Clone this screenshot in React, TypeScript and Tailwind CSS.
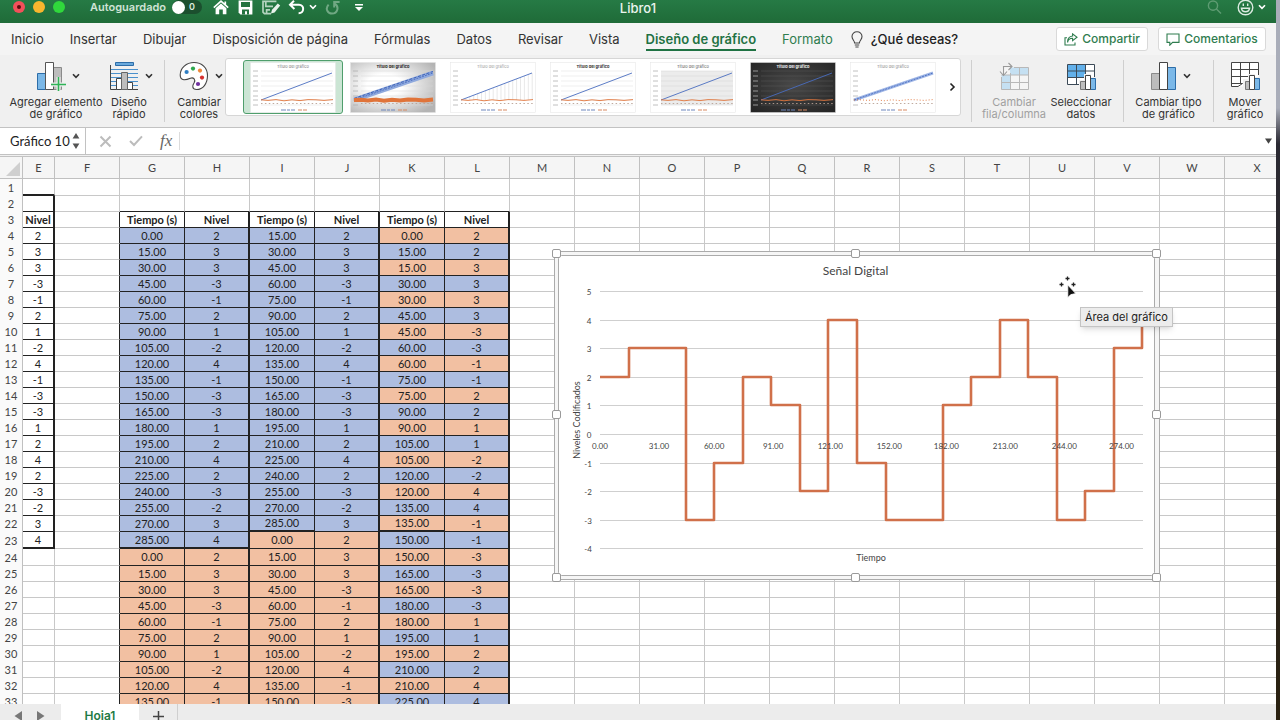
import React from "react";

const LEVELS = [2, 3, 3, -3, -1, 2, 1, -2, 4, -1, -3, -3, 1, 2, 4, 2, -3, -2, 3, 4];
const ROWS = Array.from({ length: 33 }, (_, i) => i + 1);
const COLS = "EFGHIJKLMNOPQRSTUVWX".split("");

const BLUE = "bg-[#adbde0]";
const ORANGE = "bg-[#f2c0a2]";

type Cell = { text: string; cls: string };

function cellFor(col: string, row: number): Cell {
  const light = "border-r border-b border-[#c8c8c8]";
  if (col === "E") {
    if (row === 1) return { text: "", cls: "border-r border-b-2 border-r-[#c8c8c8] border-b-[#222]" };
    if (row === 2) return { text: "", cls: "border-r-2 border-b border-[#222]" };
    if (row === 3) return { text: "Nivel", cls: "border-r-2 border-b border-[#222] font-bold" };
    if (row < 23) return { text: String(LEVELS[row - 4]), cls: "border-r-2 border-b border-[#222]" };
    if (row === 23) return { text: String(LEVELS[19]), cls: "border-r-2 border-b-2 border-[#222]" };
    return { text: "", cls: light };
  }
  if (col === "F") {
    return { text: "", cls: row >= 3 ? "border-r border-b border-b-[#c8c8c8] border-r-[#222]" : light };
  }
  const pair = "GHIJKL".indexOf(col);
  if (pair < 0 || row === 1) return { text: "", cls: light };
  if (row === 2) return { text: "", cls: "border-r border-b border-r-[#c8c8c8] border-b-[#222]" };

  const isTime = pair % 2 === 0;
  const right = isTime ? "border-r" : "border-r-2";
  if (row === 3) {
    return { text: isTime ? "Tiempo (s)" : "Nivel", cls: right + " border-b border-[#222] font-bold" };
  }
  let time = 0;
  let level = 0;
  let fill = BLUE;
  let bottom = "border-b";
  if (pair < 2) {
    const i = row < 24 ? row - 4 : row - 24;
    time = 15 * i;
    level = LEVELS[i];
    fill = row < 24 ? BLUE : ORANGE;
    if (row === 23) bottom = "border-b-2";
  } else if (pair < 4) {
    const first = row < 23;
    const i = first ? row - 4 : row - 23;
    time = first ? 15 * (i + 1) : 15 * i;
    level = LEVELS[i];
    fill = first ? BLUE : ORANGE;
    if (row === 22 && isTime) bottom = "border-b-2";
  } else {
    const i = row - 4;
    time = 15 * Math.ceil(i / 2);
    level = LEVELS[Math.floor(i / 2)];
    fill = i % 2 === 0 ? ORANGE : BLUE;
    if (row === 22 && isTime) bottom = "border-b-2";
  }
  return {
    text: isTime ? time.toFixed(2) : String(level),
    cls: right + " " + bottom + " border-[#222] " + fill,
  };
}

function rowHeight(row: number) {
  return row === 1 || row === 23 || row === 24 ? "h-[17px]" : "h-4";
}

function Chevron({ className = "" }: { className?: string }) {
  return (
    <svg width="8" height="6" viewBox="0 0 8 6" className={className} fill="none" stroke="currentColor" strokeWidth="1.6">
      <path d="M1 1.2 L4 4.4 L7 1.2" />
    </svg>
  );
}

/* ---------- Title bar ---------- */

function TitleBar() {
  return (
    <header className="relative flex h-[23px] shrink-0 items-center bg-linear-to-b from-[#267a45] to-[#1f6b38] pb-[9px] pl-[13px] pr-[10px] text-white">
      <div className="flex gap-2">
        <button aria-label="Cerrar" className="flex size-3 items-center justify-center rounded-full bg-[#f2505a]">
          <span className="size-1 rounded-full bg-[#5c0a0e]" />
        </button>
        <button aria-label="Minimizar" className="size-3 rounded-full bg-[#f8b62e]" />
        <button aria-label="Ampliar" className="size-3 rounded-full bg-[#30d83c]" />
      </div>
      <label className="ml-[25px] flex items-center gap-1.5 text-[11px] leading-[14px] font-semibold text-[#cfe3d5]">
        Autoguardado
        <span className="relative flex h-[14px] w-[30px] items-center rounded-full bg-[#1b4f2e]">
          <input type="checkbox" className="size-[13px] appearance-none rounded-full bg-white" />
          <span className="ml-1 text-[9px] leading-3 text-[#dbe9df]">0</span>
        </span>
      </label>
      <div className="ml-[11px] flex items-center">
        <button aria-label="Inicio" className="w-[25px]">
          <svg width="16" height="15" viewBox="0 0 16 15">
            <path d="M.8 7.6 L8 1.2 L15.2 7.6 M12.3 1.4 V4.6" fill="none" stroke="#fff" strokeWidth="1.7" />
            <path d="M2.6 8.2 L8 3.6 L13.4 8.2 V14.2 H9.8 V9.6 H6.2 V14.2 H2.6 Z" fill="#fff" />
          </svg>
        </button>
        <button aria-label="Guardar" className="w-[24px]">
          <svg width="15" height="15" viewBox="0 0 15 15">
            <path d="M.6 .6 H14.4 V14.4 H2.4 L.6 12.6 Z" fill="#fff" />
            <path d="M3 2 H12 V7 H3 Z M4 9.4 H11 V14.4 H9 V11.2 H7 V14.4 H4 Z" fill="#23733f" />
          </svg>
        </button>
        <button aria-label="Guardar como" className="w-[26px]">
          <svg width="19" height="15" viewBox="0 0 19 15">
            <path d="M9 13.6 H2.4 L1 12.2 V1.4 H14.4 M3.8 1.4 V6.4 H11 M4.6 13.6 V9.8 H8" fill="none" stroke="#b4d3bf" strokeWidth="1.7" />
            <path d="M9 13.6 L10 9.8 L15.8 3.4 L18.2 5.6 L12.6 12.4 Z" fill="#e8f2eb" />
          </svg>
        </button>
        <button aria-label="Deshacer" className="w-[21px]">
          <svg width="17" height="15" viewBox="0 0 17 15" fill="none" stroke="#fff" strokeWidth="2">
            <path d="M6 .8 L2 4.8 L6.4 9 M2.4 4.8 H11 C16.8 4.8 16.4 13 10.6 13.2" />
          </svg>
        </button>
        <button aria-label="Opciones de deshacer" className="w-[16px]">
          <Chevron />
        </button>
        <button aria-label="Rehacer" className="w-[30px]">
          <svg width="15" height="15" viewBox="0 0 15 15" fill="none" stroke="#70a883" strokeWidth="2">
            <path d="M3.6 4.6 C-.4 9 3 13.6 7 13.6 C12.6 13.6 14.6 6.6 9.6 3.6 M14.6 2 H9.2 V7.6" />
          </svg>
        </button>
        <button aria-label="Personalizar barra">
          <svg width="8" height="9" viewBox="0 0 8 9" fill="#fff">
            <path d="M0 1 H8 V2.4 H0 Z M0 4 H8 L4 8 Z" />
          </svg>
        </button>
      </div>
      <h1 className="absolute inset-x-0 top-0 text-center text-[13px] leading-4 font-medium text-[#eaf4ed] pointer-events-none">
        Libro1
      </h1>
      <div className="ml-auto flex items-center">
        <button aria-label="Buscar" className="w-[30px]">
          <svg width="15" height="15" viewBox="0 0 15 15" fill="none" stroke="#5f9c73" strokeWidth="1.4">
            <circle cx="6" cy="5.6" r="4.6" />
            <path d="M9.4 9 L14 13.6" />
          </svg>
        </button>
        <button aria-label="Comentarios de usuario" className="flex items-center gap-1">
          <svg width="17" height="17" viewBox="0 0 17 17" fill="none" stroke="#dcebe1" strokeWidth="1.4">
            <circle cx="8.5" cy="8.5" r="7.3" />
            <path d="M4.4 9.2 C5 14 12 14 12.6 9.2 Z M6.3 4.4 V7 M10.7 4.4 V7" />
          </svg>
          <Chevron />
        </button>
      </div>
    </header>
  );
}

/* ---------- Ribbon tabs ---------- */

function RibbonTabs() {
  const tabs = ["Inicio", "Insertar", "Dibujar", "Disposición de página", "Fórmulas", "Datos", "Revisar", "Vista"];
  return (
    <nav className="flex h-8 shrink-0 items-center bg-[#f4f4f4] pl-[11px] pr-[10px] text-[13px] leading-4 text-[#333]">
      <div className="flex items-center gap-[26px] whitespace-nowrap">
        {tabs.map((t) => (
          <button key={t}>{t}</button>
        ))}
        <button className="relative font-semibold text-[#1f7243] after:absolute after:inset-x-0 after:-bottom-1 after:h-[2px] after:bg-[#1f7243]">
          Diseño de gráfico
        </button>
        <button className="text-[#2f7d4f]">Formato</button>
      </div>
      <button className="ml-[18px] flex items-center gap-2 whitespace-nowrap font-medium text-[#222]">
        <svg width="12" height="17" viewBox="0 0 12 17" fill="none" stroke="#444" strokeWidth="1.1">
          <path d="M3.6 12 C3.6 9.6 1 8.8 1 5.6 C1 2.6 3.2 .8 6 .8 C8.8 .8 11 2.6 11 5.6 C11 8.8 8.4 9.6 8.4 12 Z M3.8 14 H8.2 M4.4 16 H7.6" />
        </svg>
        ¿Qué deseas?
      </button>
      <div className="ml-auto flex gap-[10px] text-[12px] font-medium text-[#2f7d4f]">
        <button className="flex h-6 w-[92px] items-center justify-center gap-1 rounded-[3px] border border-[#d9d9d9] bg-white">
          <svg width="14" height="13" viewBox="0 0 14 13" fill="none" stroke="currentColor" strokeWidth="1.1">
            <path d="M3 4.8 H1 V12 H11 V9.4 M3.6 9.4 C4 6.4 6 5.2 8.6 5.2 V7.6 L13 4.2 L8.6 .9 V3 C5 3.2 3.4 6 3.6 9.4 Z" />
          </svg>
          Compartir
        </button>
        <button className="flex h-6 w-[108px] items-center justify-center gap-1 rounded-[3px] border border-[#d9d9d9] bg-white">
          <svg width="14" height="13" viewBox="0 0 14 13" fill="none" stroke="currentColor" strokeWidth="1.1">
            <path d="M1 1 H13 V9.4 H6.6 L3.8 12.2 V9.4 H1 Z" />
          </svg>
          Comentarios
        </button>
      </div>
    </nav>
  );
}

/* ---------- Ribbon ---------- */

function RibbonButton(props: {
  lines: [string, string];
  width: string;
  icon: React.ReactNode;
  chevron?: boolean;
  disabled?: boolean;
}) {
  return (
    <button
      disabled={props.disabled}
      className={
        "flex shrink-0 flex-col items-center whitespace-nowrap text-[11px] leading-3 " +
        props.width +
        (props.disabled ? " text-[#a0a0a0]" : " text-[#333]")
      }
    >
      <span className={"flex h-[34px] items-center gap-1.5 " + (props.chevron ? "pl-1" : "")}>
        {props.icon}
        {props.chevron && <Chevron />}
      </span>
      <span className="mt-[3px]">{props.lines[0]}</span>
      <span>{props.lines[1]}</span>
    </button>
  );
}

function Separator() {
  return <span className="my-px h-[62px] w-px shrink-0 bg-[#cfcfcf]" />;
}

const AddElementIcon = (
  <svg width="30" height="30" viewBox="0 0 30 30">
    <path d="M1.5 12.5 H9.5 V28.5 H1.5 Z" fill="#7bb8e8" stroke="#2d6da8" />
    <path d="M17.5 6.5 H25.5 V28.5 H17.5 Z" fill="#bdbdbd" stroke="#8a8a8a" />
    <path d="M9.5 1.5 H17.5 V28.5 H9.5 Z" fill="#fff" stroke="#555" />
    <path d="M22.5 16 V30 M15 23.5 H30" stroke="#eee" strokeWidth="4" />
    <path d="M22.5 16 V30 M15 23.5 H30" stroke="#2fb457" strokeWidth="1.6" />
  </svg>
);

const QuickLayoutIcon = (
  <svg width="30" height="30" viewBox="0 0 30 30" fill="none">
    <path d="M6.5 1.5 H24.5 V4.5 H6.5 Z" fill="#6aa9dc" stroke="#2d6da8" />
    <path d="M2 8.5 H29 M2 12.5 H29 M2 16.5 H29 M2 20.5 H29 M2 24.5 H29" stroke="#4a90cc" />
    <path d="M1.5 4 V28.5 H29" stroke="#444" />
    <path d="M7.5 17.5 H12.5 V28.5 H7.5 Z M18.5 21.5 H23.5 V28.5 H18.5 Z" fill="#fff" stroke="#444" />
    <path d="M12.5 11.5 H18.5 V28.5 H12.5 Z" fill="#bdbdbd" stroke="#666" />
  </svg>
);

const PaletteIcon = (
  <svg width="30" height="30" viewBox="0 0 30 30">
    <path
      d="M15 1.5 C22.8 1.5 28.5 6.6 28.5 14.6 C28.5 22.6 24 28.5 17.6 28.5 C12.8 28.5 13.2 24.6 15 22 C17 18.8 14.6 16 11.4 17.2 C7.6 18.8 1.2 20.6 1.2 14 C1.2 7 7.4 1.5 15 1.5 Z"
      fill="#fff"
      stroke="#444"
      strokeWidth="1.1"
    />
    <circle cx="7.6" cy="11" r="2.1" fill="#2f7fc4" />
    <circle cx="14" cy="7.6" r="2.1" fill="#2fa84f" />
    <circle cx="21" cy="9.6" r="2.1" fill="#ee8a3c" />
    <circle cx="23" cy="16.6" r="2.1" fill="#d5302f" />
    <circle cx="19" cy="23" r="2.1" fill="#70309f" />
  </svg>
);

const SwitchRowColIcon = (
  <svg width="30" height="30" viewBox="0 0 30 30" fill="none">
    <path d="M2.5 6.5 H29.5 V28.5 H2.5 Z" fill="#f5f5f5" />
    <path d="M11 6.5 H29.5 V14 H11 Z M2.5 14 H11 V28.5 H2.5 Z" fill="#c5e0f2" />
    <path d="M15 6.5 H29.5 V28.5 H2.5 V16 M2.5 14 H29.5 M2.5 21.5 H29.5 M11.5 12 V28.5 M20.5 6.5 V28.5" stroke="#b8b8b8" />
    <path d="M4.5 14.5 V5.5 H12.5 M1 10.5 L4.5 14.5 L8 10.5 M9.5 2 L13 5.5 L9.5 9" stroke="#9a9a9a" strokeWidth="1.1" />
  </svg>
);

const SelectDataIcon = (
  <svg width="31" height="30" viewBox="0 0 31 30">
    <path d="M1.5 3.5 H28.5 V23.5 H1.5 Z" fill="#fff" />
    <path d="M1.5 3.5 H19.5 V16.5 H1.5 Z" fill="#62b0ea" />
    <path d="M1.5 3.5 H28.5 V23.5 H1.5 Z M1.5 10 H28.5 M1.5 16.5 H28.5 M10.5 3.5 V23.5 M19.5 3.5 V23.5" fill="none" stroke="#3c4a57" />
    <path d="M13 19 H18 V13 H25 V16 H31 V30 H13 Z" fill="#f0f0f0" />
    <path d="M14.5 20.5 H19.5 V28.5 H14.5 Z" fill="#bdbdbd" stroke="#777" />
    <path d="M24.5 17.5 H29.5 V28.5 H24.5 Z" fill="#7bb8e8" stroke="#2d6da8" />
    <path d="M19.5 14.5 H24.5 V28.5 H19.5 Z" fill="#fff" stroke="#444" />
  </svg>
);

const ChangeTypeIcon = (
  <svg width="27" height="30" viewBox="0 0 27 30">
    <path d="M1.5 12.5 H9.5 V28.5 H1.5 Z" fill="#bdbdbd" stroke="#8a8a8a" />
    <path d="M17.5 6.5 H25.5 V28.5 H17.5 Z" fill="#7bb8e8" stroke="#2d6da8" />
    <path d="M9.5 1.5 H17.5 V28.5 H9.5 Z" fill="#fff" stroke="#444" />
  </svg>
);

const MoveChartIcon = (
  <svg width="31" height="30" viewBox="0 0 31 30">
    <path d="M1.5 1.5 H28.5 V25.5 H1.5 Z" fill="#fff" />
    <path d="M28.5 14 V1.5 H1.5 V25.5 H8 L12.5 22.5 H1.5 M1.5 8.5 H28.5 M1.5 15.5 H20 M10.5 1.5 V22.5 M19.5 1.5 V16" fill="none" stroke="#444" />
    <path d="M13 18 H18 V13 H25 V16 H31 V30 H13 Z" fill="#f0f0f0" />
    <path d="M15.5 20.5 H19.5 V28.5 H15.5 Z" fill="#bdbdbd" stroke="#777" />
    <path d="M24.5 17.5 H29.5 V28.5 H24.5 Z" fill="#7bb8e8" stroke="#2d6da8" />
    <path d="M19.5 14.5 H24.5 V28.5 H19.5 Z" fill="#fff" stroke="#444" />
  </svg>
);

type ThumbStyle = {
  bg: string;
  title: string;
  grid: string;
  bold?: boolean;
  thick?: boolean;
  drops?: boolean;
  plot?: string;
  band?: boolean;
};

const THUMBS: ThumbStyle[] = [
  { bg: "#ffffff", title: "#777", grid: "#dcdcdc" },
  { bg: "url(#shade)", title: "#222", grid: "#d4d4d4", bold: true, thick: true },
  { bg: "#ffffff", title: "#999", grid: "#ffffff", drops: true },
  { bg: "#ffffff", title: "#333", grid: "#dcdcdc", bold: true },
  { bg: "#ffffff", title: "#555", grid: "#d6d6d6", plot: "#ececec" },
  { bg: "url(#dark)", title: "#eee", grid: "#5a5a5a", bold: true },
  { bg: "#ffffff", title: "#888", grid: "#ffffff", band: true },
];

function Thumb({ s }: { s: ThumbStyle }) {
  const ys = [9, 14, 19, 24, 29, 34, 38, 43];
  const xs = Array.from({ length: 19 }, (_, i) => 12 + i * 3.9);
  return (
    <svg width="86" height="51" viewBox="0 0 86 51">
      <defs>
        <radialGradient id="shade" cx="40%" cy="45%" r="70%">
          <stop offset="0.3" stopColor="#ffffff" />
          <stop offset="1" stopColor="#b4b4b4" />
        </radialGradient>
        <radialGradient id="dark" cx="50%" cy="45%" r="70%">
          <stop offset="0" stopColor="#484848" />
          <stop offset="1" stopColor="#252525" />
        </radialGradient>
      </defs>
      <rect x="0.5" y="0.5" width="85" height="50" fill={s.bg} stroke="#e4e4e4" strokeWidth="0.5" />
      {s.plot && <rect x="11" y="9" width="72" height="34" fill={s.plot} />}
      {ys.map((y) => (
        <g key={y}>
          <path d={`M11 ${y} H83`} stroke={s.grid} strokeWidth="0.5" />
          <path d={`M3 ${y} H8`} stroke="#b0b0b0" strokeWidth="0.8" />
        </g>
      ))}
      {s.drops && xs.map((x) => <path key={x} d={`M${x} 38 V${38 - (x - 11) * 0.38}`} stroke="#d8d8d8" strokeWidth="0.6" />)}
      <text x="43" y="6" textAnchor="middle" fontSize="4" fontWeight={s.bold ? 700 : 400} fill={s.title}>
        Título del gráfico
      </text>
      {(s.thick || s.band) && (
        <path d="M4 38 L83 11" stroke={s.thick ? "#8fa9dd" : "#9fb6e6"} strokeWidth={s.thick ? 4.5 : 3} />
      )}
      {s.thick && <path d="M4 36.5 L83 9.5" stroke="#3d62b8" strokeWidth="1" strokeDasharray="3 1.5" />}
      <path d={s.thick || s.band ? "M4 38 L83 11" : "M11 38 L82 11"} stroke="#4a6dc0" strokeWidth="0.9" strokeDasharray={s.band || s.thick ? "2 1" : undefined} />
      <path
        d={s.thick || s.band ? "M4 38 L11 37.8 L18 38.4 L26 37.6 L34 38.8 L42 37.8 L50 38.6 L58 37.6 L66 37.8 L74 38.4 L83 37.6" : "M11 37.8 L18 38.4 L26 37.6 L34 38.8 L42 37.8 L50 38.6 L58 37.6 L66 37.8 L74 38.4 L83 37.6"}
        fill="none"
        stroke="#e0743a"
        strokeWidth={s.thick ? 4 : 0.9}
        strokeDasharray={s.band ? "1 2" : undefined}
      />
      <path d="M11 41.5 H83" stroke="#b9a294" strokeWidth="0.9" strokeDasharray="1.5 2.4" />
      <path d="M31 48 H45" stroke="#6f87bd" strokeWidth="1" strokeDasharray="5 1 3 1" />
      <path d="M48 48 H57" stroke="#d88a62" strokeWidth="1" strokeDasharray="4 1" />
    </svg>
  );
}

function Ribbon() {
  return (
    <section className="flex h-[72px] shrink-0 bg-[#f0f0f0] pt-1">
      <RibbonButton width="w-[112px]" icon={AddElementIcon} chevron lines={["Agregar elemento", "de gráfico"]} />
      <RibbonButton width="w-[34px]" icon={QuickLayoutIcon} chevron lines={["Diseño", "rápido"]} />
      <span className="w-[18px] shrink-0" />
      <Separator />
      <RibbonButton width="w-[68px] -mr-2" icon={PaletteIcon} chevron lines={["Cambiar", "colores"]} />
      <div className="-mt-px flex h-[58px] min-w-0 flex-1 items-center justify-between rounded-[3px] border border-[#d6d6d6] bg-white pl-[17px]">
        <div className="flex min-w-0 overflow-hidden">
          {THUMBS.map((s, i) => (
            <button
              key={i}
              aria-label={"Estilo " + (i + 1)}
              className={
                "flex h-[54px] w-[100px] shrink-0 items-center justify-center rounded-[3px] border " +
                (i === 0 ? "border-[#4f9e6c] bg-[#cbe5d4]" : "border-transparent")
              }
            >
              <Thumb s={s} />
            </button>
          ))}
        </div>
        <button aria-label="Más estilos" className="w-4 shrink-0">
          <svg width="7" height="10" viewBox="0 0 7 10" fill="none" stroke="#222" strokeWidth="1.6" className="mx-auto">
            <path d="M1.5 1.5 L5 5 L1.5 8.5" />
          </svg>
        </button>
      </div>
      <span className="w-[10px] shrink-0" />
      <Separator />
      <RibbonButton width="w-[84px]" icon={SwitchRowColIcon} disabled lines={["Cambiar", "fila/columna"]} />
      <RibbonButton width="w-[50px]" icon={SelectDataIcon} lines={["Seleccionar", "datos"]} />
      <span className="w-[17px] shrink-0" />
      <Separator />
      <RibbonButton width="w-[89px]" icon={ChangeTypeIcon} chevron lines={["Cambiar tipo", "de gráfico"]} />
      <Separator />
      <RibbonButton width="w-[62px]" icon={MoveChartIcon} lines={["Mover", "gráfico"]} />
    </section>
  );
}

/* ---------- Formula bar ---------- */

function FormulaBar() {
  return (
    <section className="flex h-[28px] shrink-0 items-stretch border-y border-[#c2c2c2] bg-white">
      <div className="flex w-[86px] items-center border-r border-[#c2c2c2] pl-[10px]">
        <input
          aria-label="Cuadro de nombres"
          defaultValue="Gráfico 10"
          className="w-[62px] bg-transparent font-[Lato,sans-serif] text-[13px] leading-4 text-[#222] outline-none"
        />
        <svg width="8" height="18" viewBox="0 0 8 18" fill="#555">
          <path d="M4 1 L7.4 6.4 H.6 Z M4 17 L.6 11.6 H7.4 Z" />
        </svg>
      </div>
      <div className="flex items-center gap-[17px] pl-[13px]">
        <button aria-label="Cancelar">
          <svg width="13" height="13" viewBox="0 0 13 13" stroke="#bcbcbc" strokeWidth="2">
            <path d="M1.5 1.5 L11.5 11.5 M11.5 1.5 L1.5 11.5" />
          </svg>
        </button>
        <button aria-label="Aceptar">
          <svg width="14" height="12" viewBox="0 0 14 12" fill="none" stroke="#bcbcbc" strokeWidth="2">
            <path d="M1 6 L5 10 L13 1.4" />
          </svg>
        </button>
        <button aria-label="Insertar función" className="font-['Liberation_Serif',serif] text-[17px] leading-5 text-[#666] italic">
          fx
        </button>
      </div>
      <span className="my-1 ml-[7px] w-px bg-[#dcdcdc]" />
      <input aria-label="Barra de fórmulas" className="mx-2 min-w-0 flex-1 bg-transparent outline-none" />
      <button aria-label="Expandir" className="w-[15px]">
        <svg width="7" height="6" viewBox="0 0 7 6" fill="#444" className="mx-auto">
          <path d="M0 .4 H7 L3.5 5.8 Z" />
        </svg>
      </button>
    </section>
  );
}

/* ---------- Chart ---------- */

const PLOT_LEFT = 46;
const ZERO_Y = 183.5;
const STEP = 28.55;
const yFor = (v: number) => Math.floor(ZERO_Y - v * STEP);
const xFor = (i: number) => Math.round(PLOT_LEFT + i * STEP);

function linePath() {
  let d = `M${PLOT_LEFT} ${yFor(LEVELS[0])}`;
  for (let i = 1; i < LEVELS.length; i++) {
    d += ` H${xFor(i)} V${yFor(LEVELS[i])}`;
  }
  return d;
}

function Chart() {
  const ticks = [5, 4, 3, 2, 1, 0, -1, -2, -3, -4];
  const times = [0, 31, 60, 91, 121, 152, 182, 213, 244, 274];
  const handles = [
    [2.5, 2.5],
    [301.5, 2.5],
    [602.5, 2.5],
    [2.5, 163.5],
    [602.5, 163.5],
    [2.5, 326.5],
    [301.5, 326.5],
    [602.5, 326.5],
  ];
  return (
    <figure className="absolute top-[94px] left-[554px] h-[329px] w-[606px]">
      <svg width="606" height="329" viewBox="0 0 606 329" className="overflow-visible font-[Lato,sans-serif]" fill="#444">
        <rect x="0.5" y="0.5" width="605" height="328" rx="3" fill="#f6f6f6" stroke="#ababab" />
        <rect x="4.5" y="4.5" width="596" height="320" rx="3" fill="#fff" stroke="#ababab" />
        <text x="301.5" y="24" textAnchor="middle" fontSize="12">Señal Digital</text>
        {ticks.map((t) => (
          <g key={t}>
            <path d={`M46 ${yFor(t) + 0.5} H589`} stroke="#cfcfcf" />
            <text x={t < 0 ? 34 : 35} y={yFor(t) + 4} textAnchor="middle" fontSize="8">{t}</text>
          </g>
        ))}
        <path d={linePath()} fill="none" stroke="#d0704a" strokeWidth="2.6" strokeLinejoin="round" />
        {times.map((t) => (
          <text key={t} x={46 + t * 1.903} y="198" textAnchor="middle" fontSize="8">{t.toFixed(2)}</text>
        ))}
        <text x="317" y="310" textAnchor="middle" fontSize="9">Tiempo</text>
        <text transform="translate(26 169) rotate(-90)" textAnchor="middle" fontSize="9">Niveles Codificados</text>
        {handles.map(([x, y]) => (
          <rect key={`${x}-${y}`} x={x - 4} y={y - 4} width="8" height="8" rx="1.5" fill="#fff" stroke="#9a9a9a" />
        ))}
        <path d="M513.5 25.5 v4 M511.5 27.5 h4 M505.5 33.5 h4 M507.5 31.5 v4 M517.5 33.5 h4 M519.5 31.5 v4" stroke="#fff" strokeWidth="3" />
        <path d="M513.5 25.5 v4 M511.5 27.5 h4 M505.5 33.5 h4 M507.5 31.5 v4 M517.5 33.5 h4 M519.5 31.5 v4" stroke="#222" strokeWidth="1.3" />
        <path d="M513.8 34 V46.6 L516.8 43.6 L521.8 42.6 Z" fill="#111" stroke="#fff" strokeWidth="0.8" />
      </svg>
      <figcaption className="absolute top-[56px] left-[526px] border border-[#c4c4c4] bg-[#ececec] px-1 text-[11px] leading-[18px] whitespace-nowrap text-[#222] shadow-md">
        Área del gráfico
      </figcaption>
    </figure>
  );
}

/* ---------- Sheet ---------- */

function Sheet() {
  return (
    <main className="relative min-h-0 flex-1 overflow-hidden bg-white">
      <table className="w-[1290px] table-fixed border-separate border-spacing-0 text-center font-[Lato,sans-serif] text-[11px] leading-[14px] text-[#222]">
        <colgroup>
          <col className="w-[23px]" />
          <col className="w-[32px]" />
          {COLS.slice(1).map((c) => (
            <col key={c} className="w-[65px]" />
          ))}
        </colgroup>
        <thead>
          <tr className="h-[22px] bg-[#f5f5f5] text-[#444]">
            <th className="border-r border-b border-[#c0c0c0] p-0" aria-label="Seleccionar todo">
              <svg width="16" height="15" viewBox="0 0 16 15" className="mt-1 ml-[5px]">
                <path d="M15 0 V14 H1 Z" fill="#cfcfcf" />
              </svg>
            </th>
            {COLS.map((c) => (
              <th key={c} scope="col" className="border-r border-b border-[#c0c0c0] p-0 font-normal">
                {c}
              </th>
            ))}
          </tr>
        </thead>
        <tbody>
          {ROWS.map((r) => (
            <tr key={r} className={rowHeight(r)}>
              <th scope="row" className="border-r border-[#c0c0c0] bg-[#fafafa] p-0 font-normal text-[#444]">
                {r}
              </th>
              {COLS.map((c) => {
                const cell = cellFor(c, r);
                return (
                  <td key={c} className={"p-0 " + cell.cls}>
                    {cell.text}
                  </td>
                );
              })}
            </tr>
          ))}
        </tbody>
      </table>
      <Chart />
    </main>
  );
}

function SheetTabs() {
  return (
    <footer className="h-4 shrink-0 overflow-hidden bg-[#ececec]">
      <div className="flex h-6 items-center">
        <div className="flex w-[61px] items-center gap-[15px] pl-[14px]">
          <button aria-label="Hoja anterior">
            <svg width="8" height="10" viewBox="0 0 8 10" fill="#777"><path d="M8 0 V10 L.5 5 Z" /></svg>
          </button>
          <button aria-label="Hoja siguiente">
            <svg width="8" height="10" viewBox="0 0 8 10" fill="#777"><path d="M0 0 V10 L7.5 5 Z" /></svg>
          </button>
        </div>
        <button className="h-6 w-[78px] bg-white text-[12px] leading-4 font-semibold text-[#1f7a45]">Hoja1</button>
        <button aria-label="Agregar hoja" className="flex h-6 w-[39px] items-center justify-center border-r border-[#cfcfcf]">
          <svg width="11" height="11" viewBox="0 0 11 11" stroke="#444" strokeWidth="1.5">
            <path d="M5.5 0 V11 M0 5.5 H11" />
          </svg>
        </button>
      </div>
    </footer>
  );
}

export default function App() {
  return (
    <div className="flex h-screen overflow-hidden bg-[#f0f0f0] font-[Inter,sans-serif]">
      <div className="flex min-w-0 flex-1 flex-col">
        <TitleBar />
        <RibbonTabs />
        <Ribbon />
        <FormulaBar />
        <div className="h-[2px] shrink-0 border-b border-[#c2c2c2] bg-[#f0f0f0]" />
        <Sheet />
        <SheetTabs />
      </div>
      <div className="w-1 shrink-0 bg-linear-to-b from-[#a9adb9] from-15% via-[#2b2a33] via-20% to-[#2a2110]" />
    </div>
  );
}
